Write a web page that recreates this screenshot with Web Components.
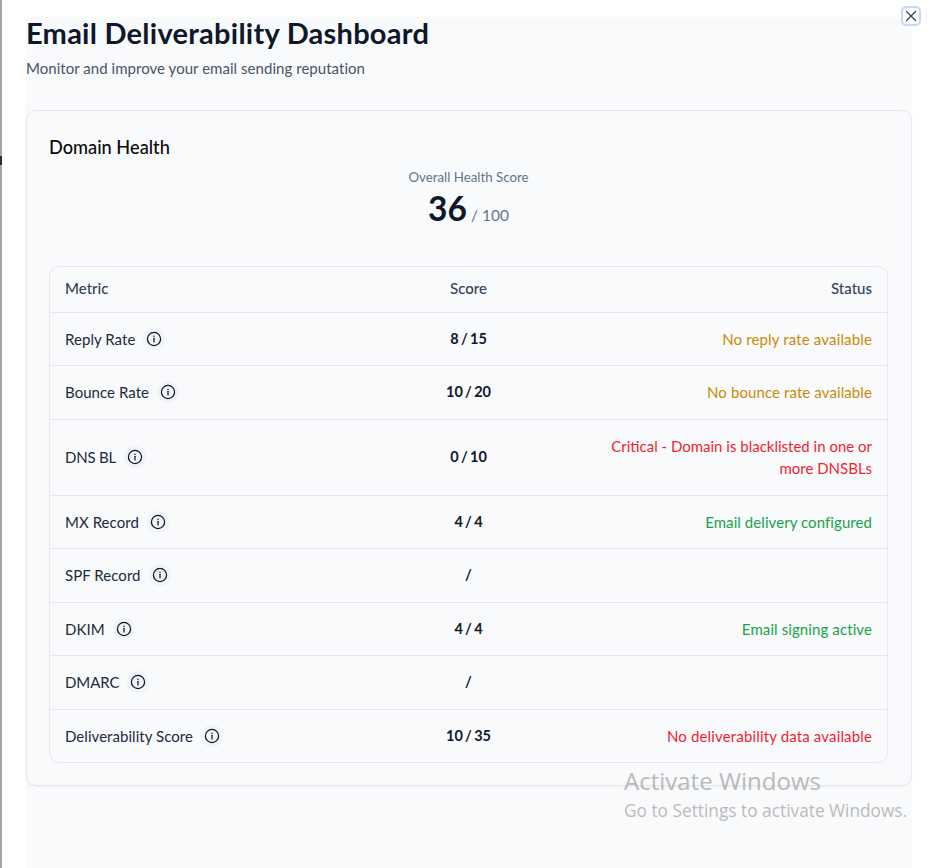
<!DOCTYPE html>
<html lang="en"><head><meta charset="utf-8"><title>Email Deliverability Dashboard</title>
<style>
html,body{margin:0;height:868px;overflow:hidden;background:#fff;font-family:Lato,"Noto Sans",sans-serif;}
</style></head><body>
<template id="t-info"><style>
:host{display:inline-flex;width:22px;height:22px;border-radius:50%;background:#f1f3f6;align-items:center;justify-content:center;flex:none}
svg{display:block}
</style><svg width="16" height="16" viewBox="0 0 16 16" fill="none" stroke="#0f172a" stroke-width="1.25"><circle cx="8" cy="8" r="6.6"/><path d="M8 7.3v3.6" stroke-linecap="round"/><circle cx="8" cy="5.2" r=".75" fill="#0f172a" stroke="none"/></svg></template>

<template id="t-row"><style>
:host{display:grid;box-sizing:border-box;grid-template-columns:minmax(0,1fr) 120px minmax(0,1fr);align-items:center;padding:15px 15px 15.5px;min-height:53.5px;border-top:1px solid #e5e7eb;font-size:15px;color:#1e293b;line-height:22px;}
.m{display:flex;align-items:center;gap:8px;height:22px;letter-spacing:.05px}
.s{text-align:center;font-weight:700;color:#0f172a;font-size:14.5px;word-spacing:-1.2px}
.t{text-align:right;padding-left:70px;letter-spacing:.15px}
</style><div class="m"><span><slot name="m"></slot></span><dash-info></dash-info></div><div class="s"><slot name="s"></slot></div><div class="t"><slot name="t"></slot></div></template>

<template id="t-head"><style>
:host{display:grid;box-sizing:border-box;grid-template-columns:minmax(0,1fr) 120px minmax(0,1fr);align-items:center;padding:0 15px 2px;height:44.6px;font-size:15px;font-weight:500;color:#334155}
.s{text-align:center}.t{text-align:right}
</style><div>Metric</div><div class="s">Score</div><div class="t">Status</div></template>

<template id="t-card"><style>
:host{display:block;box-sizing:border-box;margin-top:30px;border:1px solid #e5e7eb;border-radius:10px;padding:22px 23px 22px 22px;box-shadow:0 1px 2px rgba(0,0,0,.05);height:676px}
h2{margin:0;font-size:18.2px;line-height:28px;font-weight:500;color:#0a0a0a}
.sum{text-align:center;margin-top:8px;height:97px}
.l{font-size:13.3px;line-height:16px;color:#64748b}
.v{line-height:46px;color:#64748b;font-size:15.5px}
b{font-size:33.5px;font-weight:700;color:#0f172a}
.table{border:1px solid #e5e7eb;border-radius:10px;overflow:hidden}
</style><h2><slot name="title"></slot></h2><div class="sum"><div class="l">Overall Health Score</div><div class="v"><b>36</b> / 100</div></div><div class="table"><slot></slot></div></template>

<template id="t-app"><style>
:host{display:flex;height:868px;position:relative;overflow:hidden}
.bar{width:2px;background:#a3a3a3;flex:none}
.tick{position:absolute;left:0;top:156px;width:2px;height:9px;background:#3a2c12}
.panel{margin:17px 21px 0 24px;flex:1;background:#f8fafc;min-width:0}
h1{margin:0;font-size:29px;line-height:32px;font-weight:700;color:#0f172a;letter-spacing:.25px}
p{margin:0;margin-top:8px;padding-bottom:1px;font-size:15px;line-height:22px;color:#475569;letter-spacing:.04px}
.x{position:absolute;left:901px;top:6px;width:20px;height:20px;box-sizing:border-box;border:2px solid #bfdbfe;border-radius:5px;background:#fff;display:flex;align-items:center;justify-content:center}
.wm{position:absolute;left:624px;top:765px;color:rgba(120,120,120,.5);font-family:"Open Sans",sans-serif;pointer-events:none;white-space:nowrap}
.wm div:first-child{font-size:24px;line-height:32px}
.wm div:last-child{font-size:17.3px;line-height:28px}
</style><div class="bar"></div><div class="tick"></div><div class="panel"><h1>Email Deliverability Dashboard</h1><p>Monitor and improve your email sending reputation</p><slot></slot></div>
<div class="x"><svg width="12" height="12" viewBox="0 0 12 12" stroke="#374151" stroke-width="1.2" stroke-linecap="round"><path d="M1.5 1.5l9 9M10.5 1.5l-9 9"/></svg></div>
<div class="wm"><div>Activate Windows</div><div>Go to Settings to activate Windows.</div></div></template>

<dash-app>
<dash-card><span slot="title">Domain Health</span>
<dash-head></dash-head>
<dash-row><span slot="m">Reply Rate</span><span slot="s">8 / 15</span><span slot="t" style="color:#ca8a04">No reply rate available</span></dash-row>
<dash-row><span slot="m">Bounce Rate</span><span slot="s">10 / 20</span><span slot="t" style="color:#ca8a04;letter-spacing:.1px">No bounce rate available</span></dash-row>
<dash-row style="min-height:76px"><span slot="m" style="letter-spacing:-.2px">DNS BL</span><span slot="s">0 / 10</span><span slot="t" style="color:#f01f30;letter-spacing:0">Critical - Domain is blacklisted in one or more DNSBLs</span></dash-row>
<dash-row><span slot="m">MX Record</span><span slot="s">4 / 4</span><span slot="t" style="color:#16a34a;letter-spacing:.07px">Email delivery configured</span></dash-row>
<dash-row><span slot="m">SPF Record</span><span slot="s">/</span></dash-row>
<dash-row><span slot="m">DKIM</span><span slot="s">4 / 4</span><span slot="t" style="color:#16a34a;letter-spacing:.1px">Email signing active</span></dash-row>
<dash-row><span slot="m" style="letter-spacing:-.1px">DMARC</span><span slot="s">/</span></dash-row>
<dash-row><span slot="m">Deliverability Score</span><span slot="s">10 / 35</span><span slot="t" style="color:#f01f30">No deliverability data available</span></dash-row>
</dash-card>
</dash-app>
<script>
for (const [n,id] of [['dash-info','t-info'],['dash-row','t-row'],['dash-head','t-head'],['dash-card','t-card'],['dash-app','t-app']]) {
  customElements.define(n, class extends HTMLElement {
    constructor(){super();this.attachShadow({mode:'open'}).appendChild(document.getElementById(id).content.cloneNode(true));}
  });
}
</script>
</body></html>
